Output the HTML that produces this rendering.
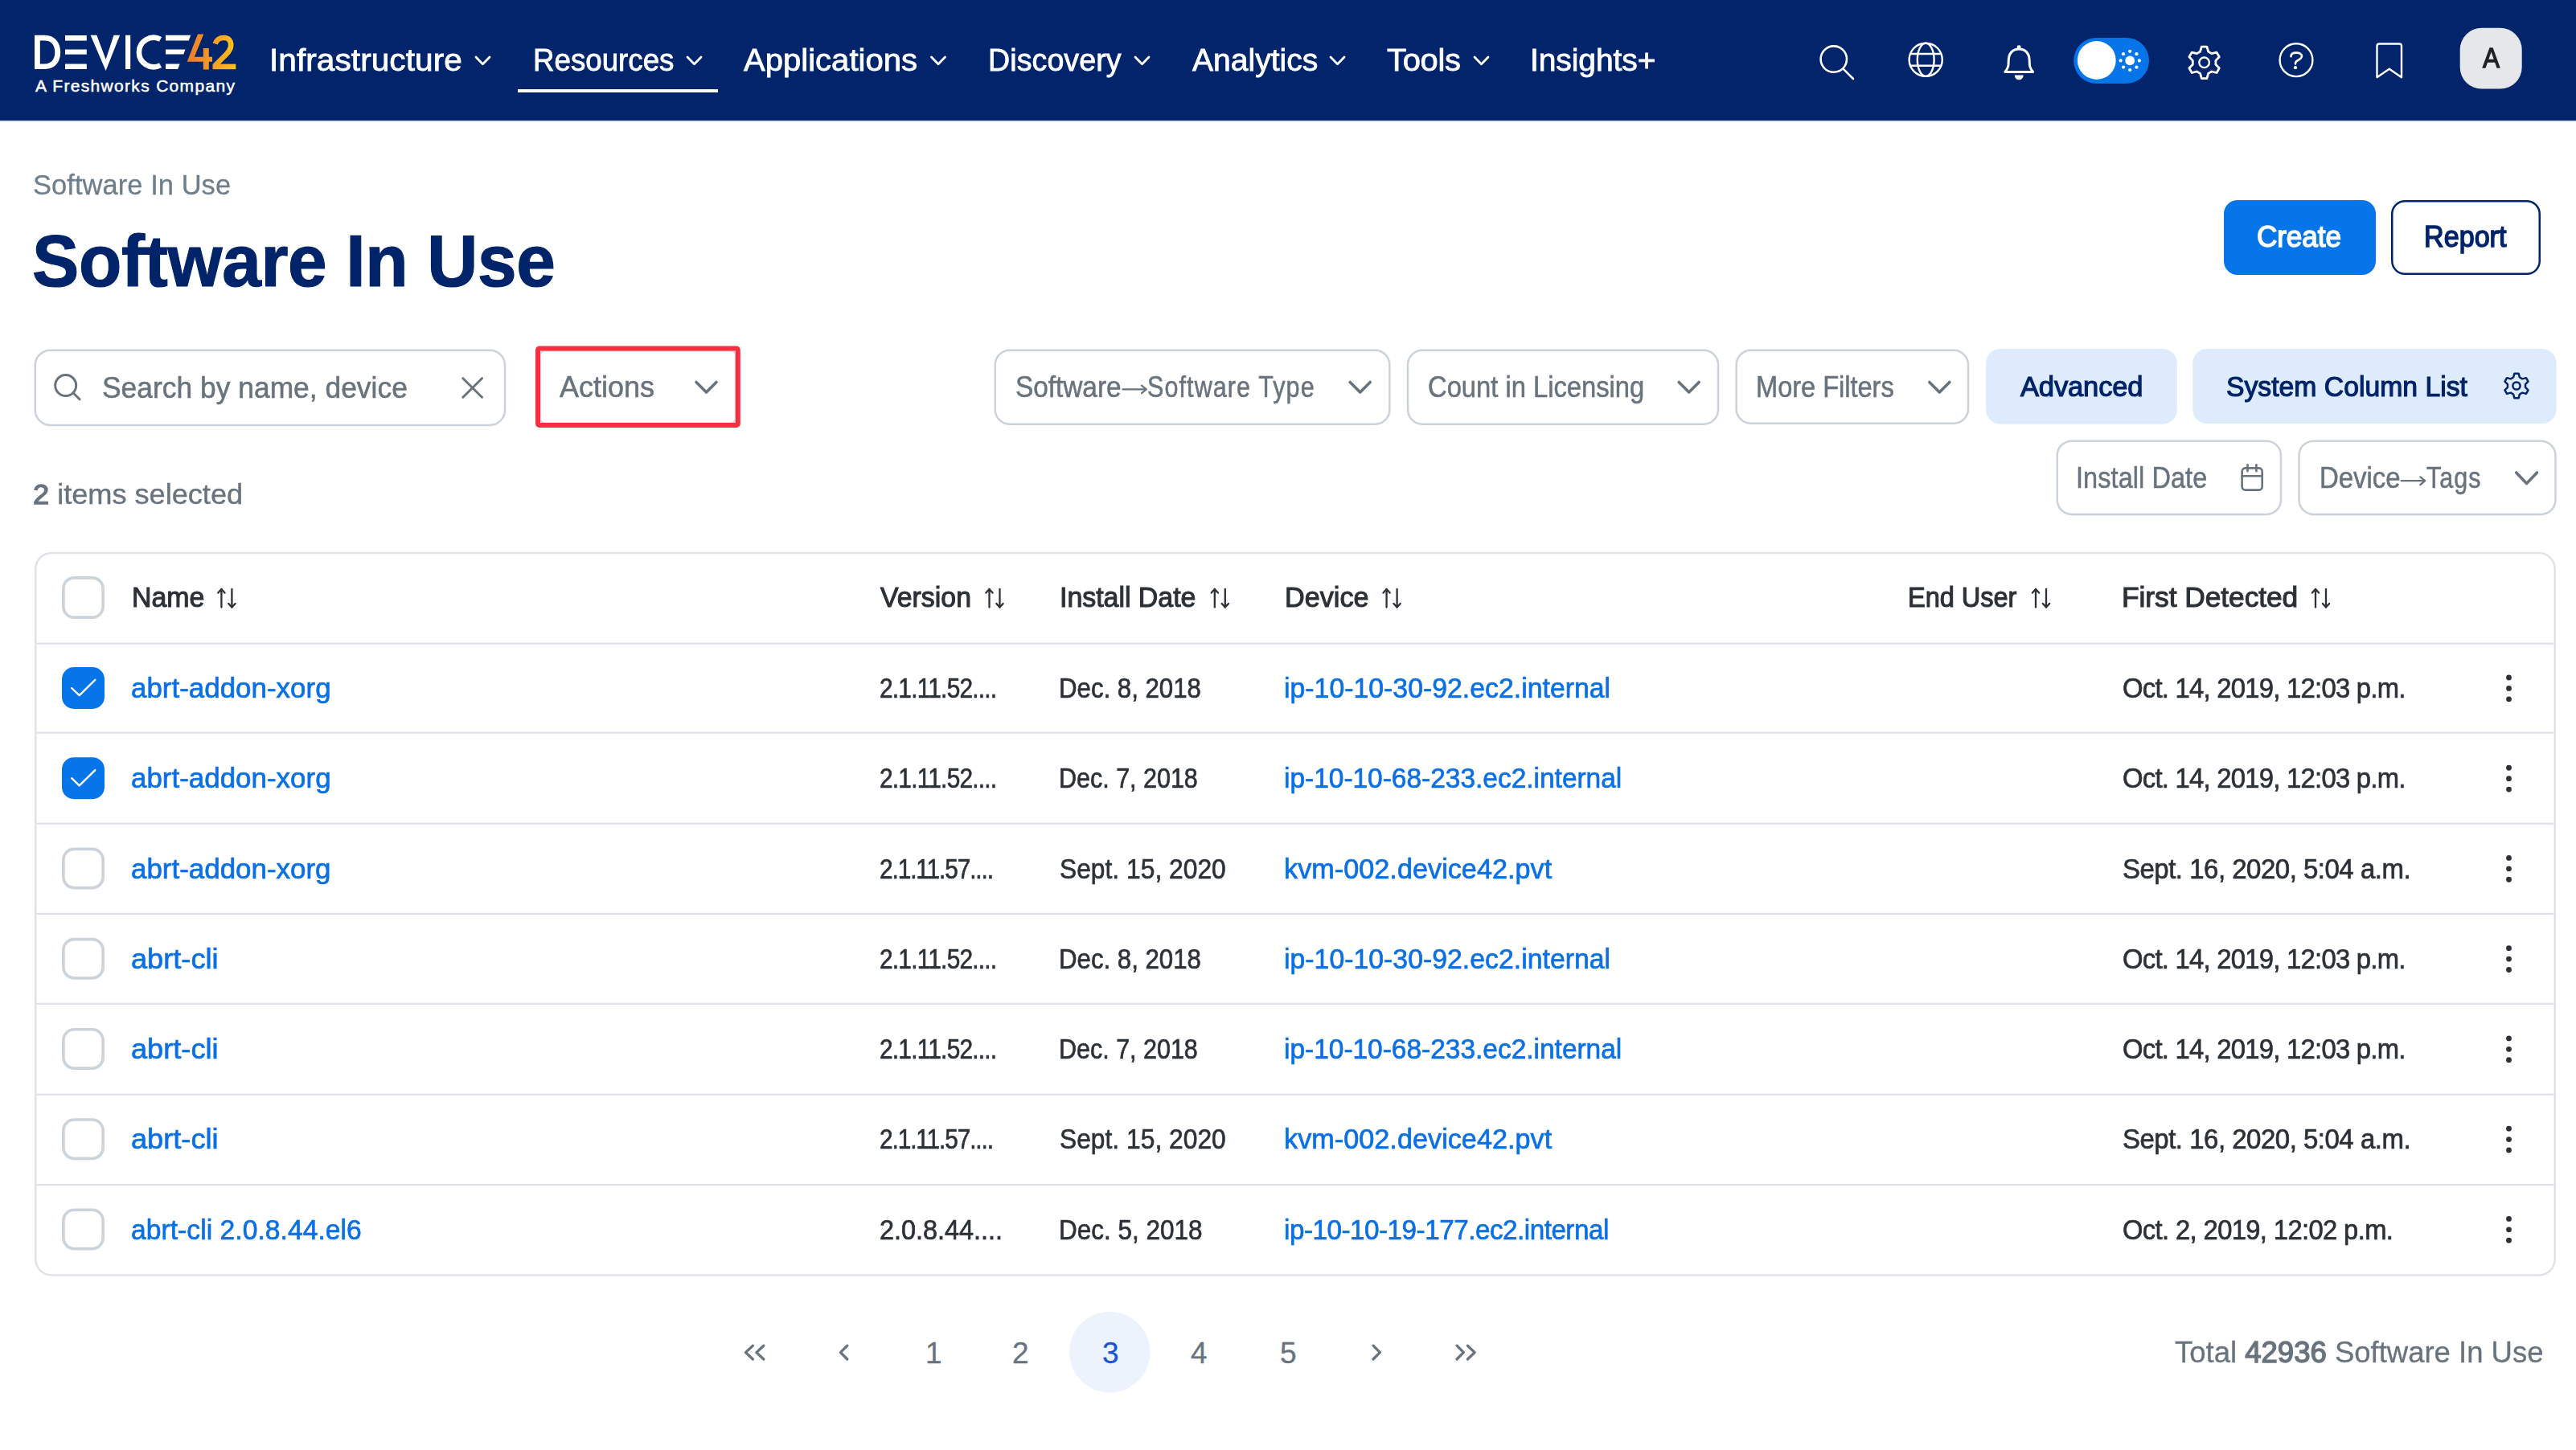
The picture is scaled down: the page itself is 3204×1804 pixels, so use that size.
<!DOCTYPE html>
<html><head><meta charset="utf-8"><title>Software In Use</title>
<style>
html,body{margin:0;padding:0}
body{width:3204px;height:1804px;overflow:hidden;background:#fff;position:relative;font-family:"Liberation Sans",sans-serif}
.t{position:absolute;white-space:nowrap;font-family:"Liberation Sans",sans-serif;transform-origin:0 0}
.t b{font-weight:400;-webkit-text-stroke-width:1.4px}
svg.bg{position:absolute;left:0;top:0}
.textonly svg.bg{display:none}
</style></head>
<body>
<svg class="bg" width="3204" height="1804" viewBox="0 0 3204 1804">
<defs>
<linearGradient id="lg" x1="232" y1="0" x2="294" y2="0" gradientUnits="userSpaceOnUse">
<stop offset="0" stop-color="#ee7a2b"/><stop offset="0.5" stop-color="#f59a28"/><stop offset="1" stop-color="#fcc419"/>
</linearGradient>
</defs>
<!-- NAV -->
<rect x="0" y="0" width="3204" height="150" fill="#01246a"/>
<rect x="0" y="150" width="3204" height="2" fill="#e3e7ec"/>
<!-- logo -->
<g fill="#fff">
<path fill-rule="evenodd" d="M43,43.8 L55.5,43.8 C68,43.8 75.2,52.5 75.2,65 C75.2,77.5 68,86 55.5,86 L43,86 Z M49.8,50.5 L49.8,79.4 L55.5,79.4 C64,79.4 68.3,73.5 68.3,65 C68.3,56.5 64,50.5 55.5,50.5 Z"/>
<rect x="81" y="44" width="26.8" height="6.6"/>
<rect x="81" y="61.5" width="26.8" height="6.2"/>
<rect x="81" y="79.5" width="26.8" height="6.5"/>
<polygon points="112.6,43.8 120.3,43.8 131.6,74 141.5,43.8 149.1,43.8 131.6,88"/>
<rect x="156" y="43.8" width="6.2" height="42.2"/>
<path d="M199.6,48.9 A18.2,18.2 0 1 0 199.6,81.1" fill="none" stroke="#fff" stroke-width="6.6"/>
<polygon points="206,43.8 237.2,43.8 234.8,50.6 206,50.6"/>
<polygon points="206,61.5 230.6,61.5 228.3,67.6 206,67.6"/>
<polygon points="206,79.5 223.6,79.5 221.2,86 206,86"/>
</g>
<g fill="url(#lg)">
<polygon points="246,42.5 253.3,42.5 241.8,70.8 252.8,70.8 252.8,60 259.8,60 259.8,70.8 264,70.8 264,76.8 259.8,76.8 259.8,86.5 252.8,86.5 252.8,76.8 232.7,76.8"/>
<path d="M267.6,54.5 C269.3,49.5 273.5,47 278.6,47 C284.5,47 287.2,51 287.2,56 C287.2,61 284.5,64.5 281,68 L267.5,81.5" fill="none" stroke="url(#lg)" stroke-width="6.6"/>
<rect x="264.5" y="79.6" width="28.8" height="6.6"/>
</g>
<!-- nav chevrons -->
<g fill="none" stroke="#fff" stroke-width="2.8" stroke-linecap="round" stroke-linejoin="round">
<polyline points="592,71 600.5,79.8 609,71"/>
<polyline points="855,71 863.5,79.8 872,71"/>
<polyline points="1158.5,71 1167,79.8 1175.5,71"/>
<polyline points="1412,71 1420.5,79.8 1429,71"/>
<polyline points="1655,71 1663.5,79.8 1672,71"/>
<polyline points="1834,71 1842.5,79.8 1851,71"/>
</g>
<rect x="644" y="111" width="249" height="4" fill="#fff"/>
<!-- nav icons -->
<g fill="none" stroke="#fff" stroke-width="2.6" stroke-linecap="round" stroke-linejoin="round">
<circle cx="2280.8" cy="73.6" r="16.2"/>
<line x1="2292.6" y1="85.6" x2="2305" y2="98"/>
<circle cx="2395.2" cy="74.3" r="20.6" stroke-width="2.4"/>
<ellipse cx="2395.2" cy="74.3" rx="10.4" ry="20.6" stroke-width="2.4"/>
<line x1="2376.5" y1="67" x2="2414" y2="67" stroke-width="2.4"/>
<line x1="2376.5" y1="81.8" x2="2414" y2="81.8" stroke-width="2.4"/>
<path d="M2511.2,60.9 C2503.5,60.9 2498.6,66.5 2498.3,74 L2498,80.5 C2497.8,84.5 2495.5,87.3 2493.8,89.4 L2528.6,89.4 C2526.9,87.3 2524.6,84.5 2524.4,80.5 L2524.1,74 C2523.8,66.5 2518.9,60.9 2511.2,60.9 Z" stroke-width="3"/>
<circle cx="2741.6" cy="77.8" r="6.3" stroke-width="2.4"/>
<path stroke-width="2.8" d="M2736.52,64.22 L2738.32,58.07 L2744.88,58.07 L2746.68,64.22 L2750.83,66.61 L2757.04,65.09 L2760.33,70.78 L2755.90,75.40 L2755.90,80.20 L2760.33,84.82 L2757.04,90.51 L2750.83,88.99 L2746.68,91.38 L2744.88,97.53 L2738.32,97.53 L2736.52,91.38 L2732.37,88.99 L2726.16,90.51 L2722.87,84.82 L2727.30,80.20 L2727.30,75.40 L2722.87,70.78 L2726.16,65.09 L2732.37,66.61 Z"/>
<circle cx="2856" cy="74.7" r="20.4" stroke-width="2.4"/>
<path d="M2849.5,70.2 C2849.5,67.3 2852,65.6 2856,65.6 C2860.3,65.6 2863,67.4 2863,69.8 C2863,72.8 2859.8,74.3 2857.3,75.5 C2855.7,76.3 2855,77.3 2855,78.7 L2855,79.5" stroke-width="2.6"/>
<path d="M2956.5,96.2 L2956.5,57.3 Q2956.5,54.5 2959.3,54.5 L2984.2,54.5 Q2987,54.5 2987,57.3 L2987,96.2 L2971.8,85.8 Z" stroke-width="2.4"/>
</g>
<g fill="#fff">
<rect x="2508.8" y="56.2" width="4.8" height="5.5" rx="2.2"/>
<path d="M2505.8,93.5 L2516.6,93.5 C2516.6,97 2514.2,99.3 2511.2,99.3 C2508.2,99.3 2505.8,97 2505.8,93.5 Z"/>
<circle cx="2855" cy="84.2" r="2.1"/>
</g>
<rect x="2579.2" y="46.9" width="93.8" height="57.1" rx="28.55" fill="#0675e9"/>
<circle cx="2607.8" cy="75" r="23.9" fill="#fff"/>
<g fill="#fff">
<circle cx="2649.2" cy="75.4" r="5.9"/>
<circle cx="2649.2" cy="63.8" r="2.1"/><circle cx="2649.2" cy="87" r="2.1"/>
<circle cx="2637.6" cy="75.4" r="2.1"/><circle cx="2660.8" cy="75.4" r="2.1"/>
<circle cx="2641" cy="67.2" r="2.1"/><circle cx="2657.4" cy="67.2" r="2.1"/>
<circle cx="2641" cy="83.6" r="2.1"/><circle cx="2657.4" cy="83.6" r="2.1"/>
</g>
<rect x="3059.7" y="34.8" width="77" height="75.8" rx="27" fill="#e6e7eb"/>

<!-- page buttons -->
<rect x="2766" y="249" width="189" height="93" rx="17" fill="#0675e9"/>
<rect x="2975.25" y="250.25" width="183.5" height="90.5" rx="16" fill="none" stroke="#002469" stroke-width="2.5"/>

<!-- filter boxes -->
<g fill="none" stroke="#cbd2d9" stroke-width="2.5">
<rect x="43.75" y="435.65" width="584.3" height="93.3" rx="19"/>
<rect x="1237.75" y="435.75" width="490.6" height="92" rx="18"/>
<rect x="1751.05" y="435.75" width="386" height="92" rx="18"/>
<rect x="2159.65" y="435.75" width="288.4" height="91" rx="18"/>
<rect x="2558.75" y="548.65" width="278.2" height="91.3" rx="18"/>
<rect x="2859.55" y="548.65" width="318.9" height="91.3" rx="18"/>
</g>
<!-- actions red box -->
<filter id="sh" x="-10%" y="-20%" width="120%" height="150%"><feDropShadow dx="0" dy="2" stdDeviation="3" flood-color="#1b2a3a" flood-opacity="0.13"/></filter>
<rect x="669" y="433.6" width="248.8" height="95.4" rx="3" fill="#fff" filter="url(#sh)"/>
<rect x="671.6" y="436.2" width="243.6" height="90.2" rx="6" fill="#fefefe" stroke="#cdd4da" stroke-width="2"/>
<rect x="669" y="433.6" width="248.8" height="95.4" rx="1.8" fill="none" stroke="#f72e3e" stroke-width="6"/>
<g fill="none" stroke="#69737e" stroke-width="3" stroke-linecap="round" stroke-linejoin="round">
<circle cx="81.7" cy="479.6" r="13"/>
<line x1="91.2" y1="489" x2="99" y2="496.8"/>
<line x1="575.8" y1="470.7" x2="599.5" y2="494.2"/>
<line x1="599.5" y1="470.7" x2="575.8" y2="494.2"/>
<polyline points="866,475.5 878.5,488 891,475.5" stroke-width="3.6"/>
<g stroke-width="2.3"><line x1="1396.5" y1="484.4" x2="1425.5" y2="484.4"/><polyline points="1420,479.6 1425.8,484.4 1420,489.2"/>
<line x1="2986.8" y1="598.2" x2="3016" y2="598.2"/><polyline points="3010.4,593.4 3016.2,598.2 3010.4,603"/></g>
<polyline points="1679.2,475.5 1691.7,488 1704.2,475.5" stroke-width="3.6"/>
<polyline points="2088.2,475.5 2100.7,488 2113.2,475.5" stroke-width="3.6"/>
<polyline points="2399.8,475.5 2412.3,488 2424.8,475.5" stroke-width="3.6"/>
<polyline points="3129.7,588 3142.6,601.5 3155.5,588" stroke-width="3.6"/>
<rect x="2788.6" y="582.4" width="25.1" height="27.2" rx="4" stroke-width="2.6"/>
<line x1="2788.6" y1="592.3" x2="2813.7" y2="592.3" stroke-width="2.6"/>
<line x1="2795.5" y1="578.3" x2="2795.5" y2="586.3" stroke-width="2.6"/>
<line x1="2806.4" y1="578.3" x2="2806.4" y2="586.3" stroke-width="2.6"/>
</g>
<rect x="2470.1" y="433.9" width="237.7" height="93.8" rx="18" fill="#deebfd"/>
<rect x="2727.2" y="433.9" width="452.5" height="93.1" rx="18" fill="#deebfd"/>
<g fill="none" stroke="#002469" stroke-width="2.5" stroke-linejoin="round">
<path d="M3126.08,469.51 L3127.46,464.71 L3132.54,464.71 L3133.92,469.51 L3137.13,471.36 L3141.97,470.15 L3144.51,474.56 L3141.05,478.15 L3141.05,481.85 L3144.51,485.44 L3141.97,489.85 L3137.13,488.64 L3133.92,490.49 L3132.54,495.29 L3127.46,495.29 L3126.08,490.49 L3122.87,488.64 L3118.03,489.85 L3115.49,485.44 L3118.95,481.85 L3118.95,478.15 L3115.49,474.56 L3118.03,470.15 L3122.87,471.36 Z"/>
<circle cx="3130" cy="480" r="4.6"/>
</g>

<!-- table card -->
<rect x="44.25" y="687.95" width="3133.5" height="898.5" rx="20" fill="none" stroke="#dfe2e7" stroke-width="2.5"/>
<rect x="45.5" y="799.60" width="3131" height="2.2" fill="#dee2e7"/>
<rect x="45.5" y="910.50" width="3131" height="2.2" fill="#dee2e7"/>
<rect x="45.5" y="1023.60" width="3131" height="2.2" fill="#dee2e7"/>
<rect x="45.5" y="1135.80" width="3131" height="2.2" fill="#dee2e7"/>
<rect x="45.5" y="1247.70" width="3131" height="2.2" fill="#dee2e7"/>
<rect x="45.5" y="1360.60" width="3131" height="2.2" fill="#dee2e7"/>
<rect x="45.5" y="1473.00" width="3131" height="2.2" fill="#dee2e7"/>
<rect x="78.85" y="718.85" width="49.3" height="49.3" rx="13.5" fill="none" stroke="#cdd3da" stroke-width="3.7"/>
<g fill="none" stroke="#2c3137" stroke-width="2.3" stroke-linecap="round" stroke-linejoin="round"><line x1="275.40" y1="733" x2="275.40" y2="755.5"/><polyline points="271.30,737.6 275.40,733 279.50,737.6"/><line x1="288.40" y1="733" x2="288.40" y2="755.5"/><polyline points="284.30,750.9 288.40,755.5 292.50,750.9"/></g>
<g fill="none" stroke="#2c3137" stroke-width="2.3" stroke-linecap="round" stroke-linejoin="round"><line x1="1230.50" y1="733" x2="1230.50" y2="755.5"/><polyline points="1226.40,737.6 1230.50,733 1234.60,737.6"/><line x1="1243.50" y1="733" x2="1243.50" y2="755.5"/><polyline points="1239.40,750.9 1243.50,755.5 1247.60,750.9"/></g>
<g fill="none" stroke="#2c3137" stroke-width="2.3" stroke-linecap="round" stroke-linejoin="round"><line x1="1510.80" y1="733" x2="1510.80" y2="755.5"/><polyline points="1506.70,737.6 1510.80,733 1514.90,737.6"/><line x1="1523.80" y1="733" x2="1523.80" y2="755.5"/><polyline points="1519.70,750.9 1523.80,755.5 1527.90,750.9"/></g>
<g fill="none" stroke="#2c3137" stroke-width="2.3" stroke-linecap="round" stroke-linejoin="round"><line x1="1724.60" y1="733" x2="1724.60" y2="755.5"/><polyline points="1720.50,737.6 1724.60,733 1728.70,737.6"/><line x1="1737.60" y1="733" x2="1737.60" y2="755.5"/><polyline points="1733.50,750.9 1737.60,755.5 1741.70,750.9"/></g>
<g fill="none" stroke="#2c3137" stroke-width="2.3" stroke-linecap="round" stroke-linejoin="round"><line x1="2532.00" y1="733" x2="2532.00" y2="755.5"/><polyline points="2527.90,737.6 2532.00,733 2536.10,737.6"/><line x1="2545.00" y1="733" x2="2545.00" y2="755.5"/><polyline points="2540.90,750.9 2545.00,755.5 2549.10,750.9"/></g>
<g fill="none" stroke="#2c3137" stroke-width="2.3" stroke-linecap="round" stroke-linejoin="round"><line x1="2880.00" y1="733" x2="2880.00" y2="755.5"/><polyline points="2875.90,737.6 2880.00,733 2884.10,737.6"/><line x1="2893.00" y1="733" x2="2893.00" y2="755.5"/><polyline points="2888.90,750.9 2893.00,755.5 2897.10,750.9"/></g>
<rect x="77" y="830.00" width="53" height="52" rx="15" fill="#0675e9"/>
<polyline points="89.1,856.00 98.7,865.10 118.3,845.80" fill="none" stroke="#fff" stroke-width="2.4" stroke-linecap="round" stroke-linejoin="round"/>
<circle cx="3120.5" cy="843.00" r="3.4" fill="#2c3137"/>
<circle cx="3120.5" cy="856.40" r="3.4" fill="#2c3137"/>
<circle cx="3120.5" cy="869.80" r="3.4" fill="#2c3137"/>
<rect x="77" y="942.23" width="53" height="52" rx="15" fill="#0675e9"/>
<polyline points="89.1,968.23 98.7,977.33 118.3,958.03" fill="none" stroke="#fff" stroke-width="2.4" stroke-linecap="round" stroke-linejoin="round"/>
<circle cx="3120.5" cy="955.23" r="3.4" fill="#2c3137"/>
<circle cx="3120.5" cy="968.63" r="3.4" fill="#2c3137"/>
<circle cx="3120.5" cy="982.03" r="3.4" fill="#2c3137"/>
<rect x="78.85" y="1056.31" width="49.3" height="48.3" rx="13.5" fill="none" stroke="#cdd3da" stroke-width="3.7"/>
<circle cx="3120.5" cy="1067.46" r="3.4" fill="#2c3137"/>
<circle cx="3120.5" cy="1080.86" r="3.4" fill="#2c3137"/>
<circle cx="3120.5" cy="1094.26" r="3.4" fill="#2c3137"/>
<rect x="78.85" y="1168.54" width="49.3" height="48.3" rx="13.5" fill="none" stroke="#cdd3da" stroke-width="3.7"/>
<circle cx="3120.5" cy="1179.69" r="3.4" fill="#2c3137"/>
<circle cx="3120.5" cy="1193.09" r="3.4" fill="#2c3137"/>
<circle cx="3120.5" cy="1206.49" r="3.4" fill="#2c3137"/>
<rect x="78.85" y="1280.77" width="49.3" height="48.3" rx="13.5" fill="none" stroke="#cdd3da" stroke-width="3.7"/>
<circle cx="3120.5" cy="1291.92" r="3.4" fill="#2c3137"/>
<circle cx="3120.5" cy="1305.32" r="3.4" fill="#2c3137"/>
<circle cx="3120.5" cy="1318.72" r="3.4" fill="#2c3137"/>
<rect x="78.85" y="1393.00" width="49.3" height="48.3" rx="13.5" fill="none" stroke="#cdd3da" stroke-width="3.7"/>
<circle cx="3120.5" cy="1404.15" r="3.4" fill="#2c3137"/>
<circle cx="3120.5" cy="1417.55" r="3.4" fill="#2c3137"/>
<circle cx="3120.5" cy="1430.95" r="3.4" fill="#2c3137"/>
<rect x="78.85" y="1505.23" width="49.3" height="48.3" rx="13.5" fill="none" stroke="#cdd3da" stroke-width="3.7"/>
<circle cx="3120.5" cy="1516.38" r="3.4" fill="#2c3137"/>
<circle cx="3120.5" cy="1529.78" r="3.4" fill="#2c3137"/>
<circle cx="3120.5" cy="1543.18" r="3.4" fill="#2c3137"/>
<!-- pagination -->
<circle cx="1380.25" cy="1682.25" r="50.25" fill="#edf3fd"/>
<g fill="none" stroke="#69737e" stroke-width="3.3" stroke-linecap="round" stroke-linejoin="round">
<polyline points="936.4,1674.2 927.4,1682.6 936.4,1691"/>
<polyline points="949.8,1674.2 940.8,1682.6 949.8,1691"/>
<polyline points="1053.8,1674.2 1045.4,1682.6 1053.8,1691"/>
<polyline points="1708,1674.2 1716.4,1682.6 1708,1691"/>
<polyline points="1812,1674.2 1820.4,1682.6 1812,1691"/>
<polyline points="1825.4,1674.2 1834.2,1682.6 1825.4,1691"/>
</g>
</svg>
<div class="t" style="left:335.00px;top:55.95px;font-size:38.3px;line-height:38.3px;font-weight:400;color:#ffffff;-webkit-text-stroke-width:0.8px;transform:scaleX(1.0600);letter-spacing:0.049px;">Infrastructure</div>
<div class="t" style="left:662.80px;top:55.95px;font-size:38.3px;line-height:38.3px;font-weight:400;color:#ffffff;-webkit-text-stroke-width:0.8px;transform:scaleX(0.9594);letter-spacing:-0.026px;">Resources</div>
<div class="t" style="left:925.20px;top:55.95px;font-size:38.3px;line-height:38.3px;font-weight:400;color:#ffffff;-webkit-text-stroke-width:0.8px;transform:scaleX(1.0451);letter-spacing:0.017px;">Applications</div>
<div class="t" style="left:1228.80px;top:55.95px;font-size:38.3px;line-height:38.3px;font-weight:400;color:#ffffff;-webkit-text-stroke-width:0.8px;transform:scaleX(0.9801);letter-spacing:0.102px;">Discovery</div>
<div class="t" style="left:1483.00px;top:55.95px;font-size:38.3px;line-height:38.3px;font-weight:400;color:#ffffff;-webkit-text-stroke-width:0.8px;transform:scaleX(1.0197);">Analytics</div>
<div class="t" style="left:1725.00px;top:55.95px;font-size:38.3px;line-height:38.3px;font-weight:400;color:#ffffff;-webkit-text-stroke-width:0.8px;transform:scaleX(1.0398);letter-spacing:-0.240px;">Tools</div>
<div class="t" style="left:1903.00px;top:55.95px;font-size:38.3px;line-height:38.3px;font-weight:400;color:#ffffff;-webkit-text-stroke-width:0.8px;transform:scaleX(1.0173);letter-spacing:-0.074px;">Insights+</div>
<div class="t" style="left:3088.00px;top:54.62px;font-size:35.5px;line-height:35.5px;font-weight:400;color:#1f2023;-webkit-text-stroke-width:1.3px;transform:scaleX(0.8880);">A</div>
<div class="t" style="left:44.00px;top:95.85px;font-size:21px;line-height:21px;font-weight:400;color:#ffffff;-webkit-text-stroke-width:0.5px;letter-spacing:1.316px;">A Freshworks Company</div>
<div class="t" style="left:41.00px;top:212.57px;font-size:35.8px;line-height:35.8px;font-weight:400;color:#6e7e8b;-webkit-text-stroke-width:0.3px;transform:scaleX(0.9640);letter-spacing:0.044px;">Software In Use</div>
<div class="t" style="left:40.00px;top:278.75px;font-size:91px;line-height:91px;font-weight:700;color:#002469;-webkit-text-stroke-width:1.2px;transform:scaleX(0.9595);letter-spacing:-0.313px;">Software In Use</div>
<div class="t" style="left:2807.20px;top:276.45px;font-size:37px;line-height:37px;font-weight:400;color:#ffffff;-webkit-text-stroke-width:1.5px;transform:scaleX(0.9505);letter-spacing:-0.126px;">Create</div>
<div class="t" style="left:3014.80px;top:276.45px;font-size:37px;line-height:37px;font-weight:400;color:#002469;-webkit-text-stroke-width:1.5px;transform:scaleX(0.9209);letter-spacing:0.043px;">Report</div>
<div class="t" style="left:127.20px;top:465.14px;font-size:36.3px;line-height:36.3px;font-weight:400;color:#69737e;-webkit-text-stroke-width:0.55px;transform:scaleX(0.9749);letter-spacing:0.010px;">Search by name, device</div>
<div class="t" style="left:696.00px;top:464.14px;font-size:36.3px;line-height:36.3px;font-weight:400;color:#69737e;-webkit-text-stroke-width:0.55px;transform:scaleX(0.9915);">Actions</div>
<div class="t" style="left:1262.80px;top:464.44px;font-size:36.3px;line-height:36.3px;font-weight:400;color:#69737e;-webkit-text-stroke-width:0.55px;transform:scaleX(0.9199);letter-spacing:-0.031px;">Software</div>
<div class="t" style="left:1427.40px;top:464.44px;font-size:36.3px;line-height:36.3px;font-weight:400;color:#69737e;-webkit-text-stroke-width:0.55px;transform:scaleX(0.8400);letter-spacing:1.315px;">Software Type</div>
<div class="t" style="left:1776.00px;top:464.44px;font-size:36.3px;line-height:36.3px;font-weight:400;color:#69737e;-webkit-text-stroke-width:0.55px;transform:scaleX(0.9024);letter-spacing:-0.013px;">Count in Licensing</div>
<div class="t" style="left:2183.80px;top:464.44px;font-size:36.3px;line-height:36.3px;font-weight:400;color:#69737e;-webkit-text-stroke-width:0.55px;transform:scaleX(0.8995);letter-spacing:-0.061px;">More Filters</div>
<div class="t" style="left:2513.00px;top:463.30px;font-size:35.3px;line-height:35.3px;font-weight:400;color:#002469;-webkit-text-stroke-width:1.2px;transform:scaleX(0.9776);letter-spacing:-0.146px;">Advanced</div>
<div class="t" style="left:2768.60px;top:463.30px;font-size:35.3px;line-height:35.3px;font-weight:400;color:#002469;-webkit-text-stroke-width:1.2px;transform:scaleX(0.9548);letter-spacing:0.012px;">System Column List</div>
<div class="t" style="left:2581.60px;top:577.35px;font-size:36.3px;line-height:36.3px;font-weight:400;color:#69737e;-webkit-text-stroke-width:0.55px;transform:scaleX(0.8933);letter-spacing:0.102px;">Install Date</div>
<div class="t" style="left:2884.60px;top:577.35px;font-size:36.3px;line-height:36.3px;font-weight:400;color:#69737e;-webkit-text-stroke-width:0.55px;transform:scaleX(0.9084);letter-spacing:-0.044px;">Device</div>
<div class="t" style="left:3018.40px;top:577.35px;font-size:36.3px;line-height:36.3px;font-weight:400;color:#69737e;-webkit-text-stroke-width:0.55px;transform:scaleX(0.8400);letter-spacing:1.238px;">Tags</div>
<div class="t" style="left:41.20px;top:597.74px;font-size:35.6px;line-height:35.6px;font-weight:400;color:#69737e;-webkit-text-stroke-width:0.4px;transform:scaleX(1.0189);letter-spacing:-0.052px;"><b>2</b> items selected</div>
<div class="t" style="left:163.60px;top:726.11px;font-size:35.4px;line-height:35.4px;font-weight:400;color:#2c3137;-webkit-text-stroke-width:1.1px;transform:scaleX(0.9582);letter-spacing:-0.070px;">Name</div>
<div class="t" style="left:1095.40px;top:726.11px;font-size:35.4px;line-height:35.4px;font-weight:400;color:#2c3137;-webkit-text-stroke-width:1.1px;transform:scaleX(0.9556);letter-spacing:0.035px;">Version</div>
<div class="t" style="left:1317.80px;top:726.11px;font-size:35.4px;line-height:35.4px;font-weight:400;color:#2c3137;-webkit-text-stroke-width:1.1px;transform:scaleX(0.9592);letter-spacing:-0.038px;">Install Date</div>
<div class="t" style="left:1598.40px;top:726.11px;font-size:35.4px;line-height:35.4px;font-weight:400;color:#2c3137;-webkit-text-stroke-width:1.1px;transform:scaleX(0.9667);">Device</div>
<div class="t" style="left:2373.40px;top:726.11px;font-size:35.4px;line-height:35.4px;font-weight:400;color:#2c3137;-webkit-text-stroke-width:1.1px;transform:scaleX(0.9200);letter-spacing:-0.062px;">End User</div>
<div class="t" style="left:2639.40px;top:726.11px;font-size:35.4px;line-height:35.4px;font-weight:400;color:#2c3137;-webkit-text-stroke-width:1.1px;transform:scaleX(0.9991);letter-spacing:-0.062px;">First Detected</div>
<div class="t" style="left:162.80px;top:839.12px;font-size:35.5px;line-height:35.5px;font-weight:400;color:#0a70e4;-webkit-text-stroke-width:0.7px;transform:scaleX(0.9824);letter-spacing:0.029px;">abrt-addon-xorg</div>
<div class="t" style="left:1093.80px;top:839.12px;font-size:35.5px;line-height:35.5px;font-weight:400;color:#2c3137;-webkit-text-stroke-width:0.7px;transform:scaleX(0.8400);letter-spacing:-0.907px;">2.1.11.52....</div>
<div class="t" style="left:1317.00px;top:839.12px;font-size:35.5px;line-height:35.5px;font-weight:400;color:#2c3137;-webkit-text-stroke-width:0.7px;transform:scaleX(0.8788);">Dec. 8, 2018</div>
<div class="t" style="left:1597.20px;top:839.12px;font-size:35.5px;line-height:35.5px;font-weight:400;color:#0a70e4;-webkit-text-stroke-width:0.7px;transform:scaleX(0.9508);letter-spacing:0.032px;">ip-10-10-30-92.ec2.internal</div>
<div class="t" style="left:2640.20px;top:839.12px;font-size:35.5px;line-height:35.5px;font-weight:400;color:#2c3137;-webkit-text-stroke-width:0.7px;transform:scaleX(0.9241);letter-spacing:-0.803px;">Oct. 14, 2019, 12:03 p.m.</div>
<div class="t" style="left:162.80px;top:951.36px;font-size:35.5px;line-height:35.5px;font-weight:400;color:#0a70e4;-webkit-text-stroke-width:0.7px;transform:scaleX(0.9824);letter-spacing:0.029px;">abrt-addon-xorg</div>
<div class="t" style="left:1093.80px;top:951.36px;font-size:35.5px;line-height:35.5px;font-weight:400;color:#2c3137;-webkit-text-stroke-width:0.7px;transform:scaleX(0.8400);letter-spacing:-0.907px;">2.1.11.52....</div>
<div class="t" style="left:1317.00px;top:951.36px;font-size:35.5px;line-height:35.5px;font-weight:400;color:#2c3137;-webkit-text-stroke-width:0.7px;transform:scaleX(0.8596);letter-spacing:-0.021px;">Dec. 7, 2018</div>
<div class="t" style="left:1597.20px;top:951.36px;font-size:35.5px;line-height:35.5px;font-weight:400;color:#0a70e4;-webkit-text-stroke-width:0.7px;transform:scaleX(0.9437);letter-spacing:-0.024px;">ip-10-10-68-233.ec2.internal</div>
<div class="t" style="left:2640.20px;top:951.36px;font-size:35.5px;line-height:35.5px;font-weight:400;color:#2c3137;-webkit-text-stroke-width:0.7px;transform:scaleX(0.9241);letter-spacing:-0.803px;">Oct. 14, 2019, 12:03 p.m.</div>
<div class="t" style="left:162.80px;top:1063.59px;font-size:35.5px;line-height:35.5px;font-weight:400;color:#0a70e4;-webkit-text-stroke-width:0.7px;transform:scaleX(0.9848);letter-spacing:-0.015px;">abrt-addon-xorg</div>
<div class="t" style="left:1093.80px;top:1063.59px;font-size:35.5px;line-height:35.5px;font-weight:400;color:#2c3137;-webkit-text-stroke-width:0.7px;transform:scaleX(0.8400);letter-spacing:-1.317px;">2.1.11.57....</div>
<div class="t" style="left:1318.00px;top:1063.59px;font-size:35.5px;line-height:35.5px;font-weight:400;color:#2c3137;-webkit-text-stroke-width:0.7px;transform:scaleX(0.8934);letter-spacing:0.034px;">Sept. 15, 2020</div>
<div class="t" style="left:1597.20px;top:1063.59px;font-size:35.5px;line-height:35.5px;font-weight:400;color:#0a70e4;-webkit-text-stroke-width:0.7px;transform:scaleX(0.9645);letter-spacing:0.011px;">kvm-002.device42.pvt</div>
<div class="t" style="left:2640.20px;top:1063.59px;font-size:35.5px;line-height:35.5px;font-weight:400;color:#2c3137;-webkit-text-stroke-width:0.7px;transform:scaleX(0.9285);letter-spacing:-0.521px;">Sept. 16, 2020, 5:04 a.m.</div>
<div class="t" style="left:162.80px;top:1175.82px;font-size:35.5px;line-height:35.5px;font-weight:400;color:#0a70e4;-webkit-text-stroke-width:0.7px;transform:scaleX(1.0192);">abrt-cli</div>
<div class="t" style="left:1093.80px;top:1175.82px;font-size:35.5px;line-height:35.5px;font-weight:400;color:#2c3137;-webkit-text-stroke-width:0.7px;transform:scaleX(0.8400);letter-spacing:-0.907px;">2.1.11.52....</div>
<div class="t" style="left:1317.00px;top:1175.82px;font-size:35.5px;line-height:35.5px;font-weight:400;color:#2c3137;-webkit-text-stroke-width:0.7px;transform:scaleX(0.8788);">Dec. 8, 2018</div>
<div class="t" style="left:1597.20px;top:1175.82px;font-size:35.5px;line-height:35.5px;font-weight:400;color:#0a70e4;-webkit-text-stroke-width:0.7px;transform:scaleX(0.9508);letter-spacing:0.032px;">ip-10-10-30-92.ec2.internal</div>
<div class="t" style="left:2640.20px;top:1175.82px;font-size:35.5px;line-height:35.5px;font-weight:400;color:#2c3137;-webkit-text-stroke-width:0.7px;transform:scaleX(0.9241);letter-spacing:-0.803px;">Oct. 14, 2019, 12:03 p.m.</div>
<div class="t" style="left:162.80px;top:1288.05px;font-size:35.5px;line-height:35.5px;font-weight:400;color:#0a70e4;-webkit-text-stroke-width:0.7px;transform:scaleX(1.0192);">abrt-cli</div>
<div class="t" style="left:1093.80px;top:1288.05px;font-size:35.5px;line-height:35.5px;font-weight:400;color:#2c3137;-webkit-text-stroke-width:0.7px;transform:scaleX(0.8400);letter-spacing:-0.907px;">2.1.11.52....</div>
<div class="t" style="left:1317.00px;top:1288.05px;font-size:35.5px;line-height:35.5px;font-weight:400;color:#2c3137;-webkit-text-stroke-width:0.7px;transform:scaleX(0.8596);letter-spacing:-0.021px;">Dec. 7, 2018</div>
<div class="t" style="left:1597.20px;top:1288.05px;font-size:35.5px;line-height:35.5px;font-weight:400;color:#0a70e4;-webkit-text-stroke-width:0.7px;transform:scaleX(0.9437);letter-spacing:-0.024px;">ip-10-10-68-233.ec2.internal</div>
<div class="t" style="left:2640.20px;top:1288.05px;font-size:35.5px;line-height:35.5px;font-weight:400;color:#2c3137;-webkit-text-stroke-width:0.7px;transform:scaleX(0.9241);letter-spacing:-0.803px;">Oct. 14, 2019, 12:03 p.m.</div>
<div class="t" style="left:162.80px;top:1400.27px;font-size:35.5px;line-height:35.5px;font-weight:400;color:#0a70e4;-webkit-text-stroke-width:0.7px;transform:scaleX(1.0192);">abrt-cli</div>
<div class="t" style="left:1093.80px;top:1400.27px;font-size:35.5px;line-height:35.5px;font-weight:400;color:#2c3137;-webkit-text-stroke-width:0.7px;transform:scaleX(0.8400);letter-spacing:-1.317px;">2.1.11.57....</div>
<div class="t" style="left:1318.00px;top:1400.27px;font-size:35.5px;line-height:35.5px;font-weight:400;color:#2c3137;-webkit-text-stroke-width:0.7px;transform:scaleX(0.8934);letter-spacing:0.034px;">Sept. 15, 2020</div>
<div class="t" style="left:1597.20px;top:1400.27px;font-size:35.5px;line-height:35.5px;font-weight:400;color:#0a70e4;-webkit-text-stroke-width:0.7px;transform:scaleX(0.9645);letter-spacing:0.011px;">kvm-002.device42.pvt</div>
<div class="t" style="left:2640.20px;top:1400.27px;font-size:35.5px;line-height:35.5px;font-weight:400;color:#2c3137;-webkit-text-stroke-width:0.7px;transform:scaleX(0.9285);letter-spacing:-0.521px;">Sept. 16, 2020, 5:04 a.m.</div>
<div class="t" style="left:162.80px;top:1512.50px;font-size:35.5px;line-height:35.5px;font-weight:400;color:#0a70e4;-webkit-text-stroke-width:0.7px;transform:scaleX(0.9487);letter-spacing:0.021px;">abrt-cli 2.0.8.44.el6</div>
<div class="t" style="left:1093.80px;top:1512.50px;font-size:35.5px;line-height:35.5px;font-weight:400;color:#2c3137;-webkit-text-stroke-width:0.7px;transform:scaleX(0.9128);letter-spacing:-0.020px;">2.0.8.44....</div>
<div class="t" style="left:1317.00px;top:1512.50px;font-size:35.5px;line-height:35.5px;font-weight:400;color:#2c3137;-webkit-text-stroke-width:0.7px;transform:scaleX(0.8854);letter-spacing:0.021px;">Dec. 5, 2018</div>
<div class="t" style="left:1597.20px;top:1512.50px;font-size:35.5px;line-height:35.5px;font-weight:400;color:#0a70e4;-webkit-text-stroke-width:0.7px;transform:scaleX(0.9357);letter-spacing:-0.515px;">ip-10-10-19-177.ec2.internal</div>
<div class="t" style="left:2640.20px;top:1512.50px;font-size:35.5px;line-height:35.5px;font-weight:400;color:#2c3137;-webkit-text-stroke-width:0.7px;transform:scaleX(0.9213);letter-spacing:-0.661px;">Oct. 2, 2019, 12:02 p.m.</div>
<div class="t" style="left:1151.00px;top:1665.15px;font-size:37px;line-height:37px;font-weight:400;color:#69737e;-webkit-text-stroke-width:0.3px;">1</div>
<div class="t" style="left:1259.00px;top:1665.15px;font-size:37px;line-height:37px;font-weight:400;color:#69737e;-webkit-text-stroke-width:0.3px;">2</div>
<div class="t" style="left:1371.00px;top:1665.15px;font-size:37px;line-height:37px;font-weight:400;color:#1b53d6;-webkit-text-stroke-width:0.3px;">3</div>
<div class="t" style="left:1481.00px;top:1665.15px;font-size:37px;line-height:37px;font-weight:400;color:#69737e;-webkit-text-stroke-width:0.3px;">4</div>
<div class="t" style="left:1592.00px;top:1665.15px;font-size:37px;line-height:37px;font-weight:400;color:#69737e;-webkit-text-stroke-width:0.3px;">5</div>
<div class="t" style="left:2705.00px;top:1665.47px;font-size:36.5px;line-height:36.5px;font-weight:400;color:#69737e;-webkit-text-stroke-width:0.3px;transform:scaleX(1.0013);letter-spacing:-0.023px;">Total <b>42936</b> Software In Use</div>
</body></html>
